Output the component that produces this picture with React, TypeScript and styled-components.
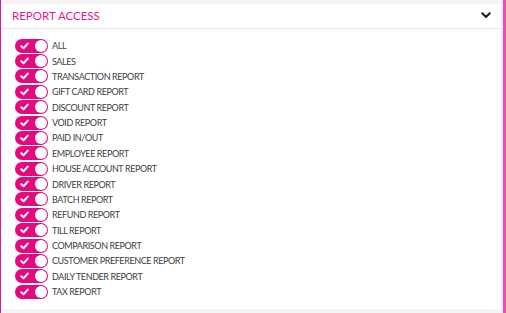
import React from "react";
import styled, { createGlobalStyle } from "styled-components";

const Global = createGlobalStyle`
  html, body { margin: 0; padding: 0; background: #f4f4f4; }
  body { font-family: Lato, "Open Sans", sans-serif; width: 506px; height: 313px; overflow: hidden; }
`;

const Page = styled.div`
  display: flex;
  width: 506px;
  height: 313px;
  box-sizing: border-box;
  padding-top: 4px;
  border-left: 1px solid #e8188c;
  border-right: 3px solid #f04cb0;
`;

const Card = styled.section`
  flex: 1;
  height: 305px;
  background: #fff;
  margin-right: 2px;
  display: flex;
  flex-direction: column;
`;

const Header = styled.div`
  height: 25px;
  display: flex;
  align-items: center;
  justify-content: space-between;
  padding: 0 10px 1px 11px;
  border-bottom: 1px solid #e6e6e6;
  box-sizing: border-box;
`;

const Title = styled.h2`
  margin: 0;
  font-size: 11.5px;
  font-weight: 400;
  color: #e8188c;
`;

const List = styled.ul`
  list-style: none;
  margin: 0;
  padding: 9px 0 0 14px;
`;

const Row = styled.li`
  height: 15.375px;
  display: flex;
  align-items: center;
  gap: 4px;
`;

const Toggle = styled.span`
  position: relative;
  width: 33px;
  height: 14px;
  border-radius: 7px;
  background: #e5097f;
  flex-shrink: 0;
  display: flex;
  align-items: center;
`;

const Knob = styled.span`
  position: absolute;
  right: 1px;
  top: 1px;
  width: 12px;
  height: 12px;
  border-radius: 50%;
  background: #fff;
`;

const Label = styled.span`
  font-size: 9px;
  letter-spacing: -0.4px;
  color: #404040;
  line-height: 1;
`;

const items = [
  "ALL",
  "SALES",
  "TRANSACTION REPORT",
  "GIFT CARD REPORT",
  "DISCOUNT REPORT",
  "VOID REPORT",
  "PAID IN/OUT",
  "EMPLOYEE REPORT",
  "HOUSE ACCOUNT REPORT",
  "DRIVER REPORT",
  "BATCH REPORT",
  "REFUND REPORT",
  "TILL REPORT",
  "COMPARISON REPORT",
  "CUSTOMER PREFERENCE REPORT",
  "DAILY TENDER REPORT",
  "TAX REPORT",
];

const Check = () => (
  <svg width="9" height="8" viewBox="0 0 9 8" style={{ marginLeft: 5 }}>
    <path d="M1.3 4.2 L3.5 6.3 L7.8 1.6" fill="none" stroke="#fff" strokeWidth="2" strokeLinecap="round" strokeLinejoin="round" />
  </svg>
);

const Chevron = () => (
  <svg width="10" height="7" viewBox="0 0 10 7">
    <path d="M1.3 1.3 L5 5 L8.7 1.3" fill="none" stroke="#222" strokeWidth="2.2" strokeLinecap="round" strokeLinejoin="round" />
  </svg>
);

export default function App() {
  return (
    <>
      <Global />
      <Page>
        <Card>
          <Header>
            <Title>REPORT ACCESS</Title>
            <Chevron />
          </Header>
          <List>
            {items.map((t) => (
              <Row key={t}>
                <Toggle>
                  <Check />
                  <Knob />
                </Toggle>
                <Label>{t}</Label>
              </Row>
            ))}
          </List>
        </Card>
      </Page>
    </>
  );
}
